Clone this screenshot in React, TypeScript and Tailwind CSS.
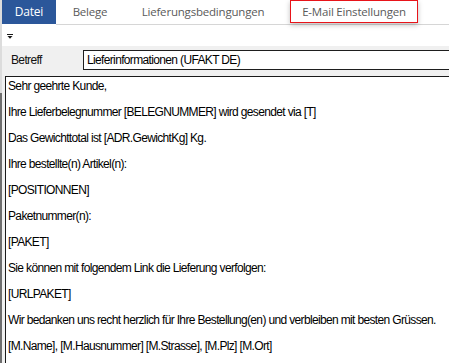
const bodyLines = [
  'Sehr geehrte Kunde,',
  'Ihre Lieferbelegnummer [BELEGNUMMER] wird gesendet via [T]',
  'Das Gewichttotal ist [ADR.GewichtKg] Kg.',
  'Ihre bestellte(n) Artikel(n):',
  '[POSITIONNEN]',
  'Paketnummer(n):',
  '[PAKET]',
  'Sie können mit folgendem Link die Lieferung verfolgen:',
  '[URLPAKET]',
  'Wir bedanken uns recht herzlich für Ihre Bestellung(en) und verbleiben mit besten Grüssen.',
  '[M.Name], [M.Hausnummer] [M.Strasse], [M.Plz] [M.Ort]',
]

function FilterIcon() {
  return (
    <svg width="6" height="5" viewBox="0 0 6 5" aria-hidden="true">
      <rect x="0" y="0" width="6" height="1" fill="#1a1a1a" />
      <path d="M0.5 2h5L3 4.8z" fill="#1a1a1a" />
    </svg>
  )
}

export default function App() {
  return (
    <div
      className="flex h-[363px] w-[449px] overflow-hidden bg-white"
      style={{ fontFamily: '"Open Sans", "Noto Sans", sans-serif' }}
    >
      {/* left window edge */}
      <div className="flex w-[2px] shrink-0 flex-col">
        <div className="h-[93px] bg-[#dcdcdc]" />
        <div className="flex-1 bg-[#6e6e6e]" />
      </div>

      <div className="flex min-w-0 flex-1 flex-col">
        {/* ribbon tabs */}
        <div className="flex h-[25px] shrink-0 text-[11.5px] tracking-[-0.2px]">
          <div className="flex h-[24px] w-[54px] items-center justify-center bg-[#2b579a] text-[12px] text-white">
            Datei
          </div>
          <div className="flex flex-1 items-start border-b border-[#d6d6d6]">
            <div className="flex h-[24px] w-[68px] items-center justify-center text-[#5a5a5a]">Belege</div>
            <div className="flex h-[24px] w-[158px] items-center justify-center text-[#5a5a5a]">
              Lieferungsbedingungen
            </div>
            <div className="ml-[8px] flex h-[23px] w-[128px] items-center justify-center border border-[#e8141a] text-[#5a5a5a] shadow-[0_2px_5px_rgba(0,0,0,0.25)]">
              E-Mail Einstellungen
            </div>
          </div>
        </div>

        {/* quick access row */}
        <div className="flex h-[21px] shrink-0 items-center pl-[5px] pt-[1px]">
          <FilterIcon />
        </div>

        {/* mail editor */}
        <div
          className="flex flex-1 flex-col bg-[#f0f0f0] text-[12px] tracking-[-0.65px] text-black"
          style={{ fontFamily: '"Liberation Sans", Arial, sans-serif' }}
        >
          <div className="flex h-[30px] shrink-0 items-start pt-[4px]">
            <span className="w-[81px] pl-[9px] pt-[3px] leading-[14px] text-[#111]">Betreff</span>
            <div className="flex h-[20px] flex-1 items-center border border-r-0 border-[#1e1e1e] bg-white pl-[3px]">
              Lieferinformationen (UFAKT DE)
            </div>
          </div>
          <div className="ml-[3px] flex flex-1 flex-col gap-[12px] border-l border-t border-[#1a1a1a] bg-white pl-[2px] pt-[2px] leading-[14px]">
            {bodyLines.map((line) => (
              <p key={line} className="whitespace-nowrap">
                {line}
              </p>
            ))}
          </div>
        </div>
      </div>
    </div>
  )
}
